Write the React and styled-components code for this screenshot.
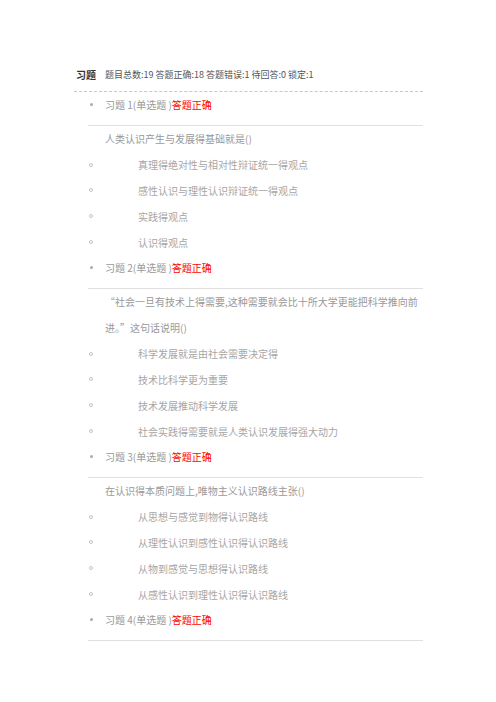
import React from 'react';
import styled, { createGlobalStyle } from 'styled-components';

const GlobalStyle = createGlobalStyle`
  html, body {
    margin: 0;
    padding: 0;
    background: #fff;
  }
  body {
    font-family: "Noto Sans CJK SC", "Liberation Sans", sans-serif;
  }
`;

const Page = styled.div`
  width: 349px;
  padding: 61px 0 40px 74px;
`;

const Header = styled.div`
  display: flex;
  align-items: center;
  height: 26px;
  padding-left: 2px;
  margin-bottom: 4px;
`;

const Title = styled.span`
  font-size: 10px;
  font-weight: bold;
  color: #333;
  margin-right: 9px;
`;

const Stats = styled.span`
  font-size: 9px;
  color: #555;
`;

const DashedLine = styled.div`
  border-top: 1px dashed #c8c8c8;
`;

const Row = styled.div`
  display: flex;
  align-items: center;
  height: 25.8px;
  padding-left: 14px;
  font-size: 10px;
  color: ${p => (p.$option ? '#a6a6a6' : '#999')};
`;

const Marker = styled.span`
  flex: none;
  width: 6px;
  display: flex;
  justify-content: center;
  margin-right: ${p => (p.$option ? '44px' : '11px')};
  &::before {
    content: '';
    display: block;
    box-sizing: border-box;
    width: ${p => (p.$option ? '4px' : '3px')};
    height: ${p => (p.$option ? '4px' : '3px')};
    border-radius: 50%;
    background: ${p => (p.$option ? 'transparent' : '#aaa')};
    border: ${p => (p.$option ? '1px solid #c4c4c4' : 'none')};
  }
`;

const Correct = styled.span`
  color: #f00;
`;

const Divider = styled.div`
  margin: 7px 0 0 14px;
  border-top: 1px solid #e0e0e0;
`;

const Question = styled.div`
  padding-left: 31px;
  font-size: 10px;
  line-height: 26px;
  color: #999;
`;

const exercises = [
  {
    n: 1,
    q: '人类认识产生与发展得基础就是()',
    opts: [
      '真理得绝对性与相对性辩证统一得观点',
      '感性认识与理性认识辩证统一得观点',
      '实践得观点',
      '认识得观点',
    ],
  },
  {
    n: 2,
    q: '“社会一旦有技术上得需要,这种需要就会比十所大学更能把科学推向前进。”这句话说明()',
    opts: [
      '科学发展就是由社会需要决定得',
      '技术比科学更为重要',
      '技术发展推动科学发展',
      '社会实践得需要就是人类认识发展得强大动力',
    ],
  },
  {
    n: 3,
    q: '在认识得本质问题上,唯物主义认识路线主张()',
    opts: [
      '从思想与感觉到物得认识路线',
      '从理性认识到感性认识得认识路线',
      '从物到感觉与思想得认识路线',
      '从感性认识到理性认识得认识路线',
    ],
  },
];

function ItemRow({ n }) {
  return (
    <Row>
      <Marker />
      <span>
        习题 {n}(单选题 )<Correct>答题正确</Correct>
      </span>
    </Row>
  );
}

export default function App() {
  return (
    <>
      <GlobalStyle />
      <Page>
        <Header>
          <Title>习题</Title>
          <Stats>题目总数:19 答题正确:18 答题错误:1 待回答:0 锁定:1</Stats>
        </Header>
        <DashedLine />
        {exercises.map(ex => (
          <div key={ex.n}>
            <ItemRow n={ex.n} />
            <Divider />
            <Question>{ex.q}</Question>
            {ex.opts.map(o => (
              <Row key={o} $option>
                <Marker $option />
                <span>{o}</span>
              </Row>
            ))}
          </div>
        ))}
        <ItemRow n={4} />
        <Divider />
      </Page>
    </>
  );
}
